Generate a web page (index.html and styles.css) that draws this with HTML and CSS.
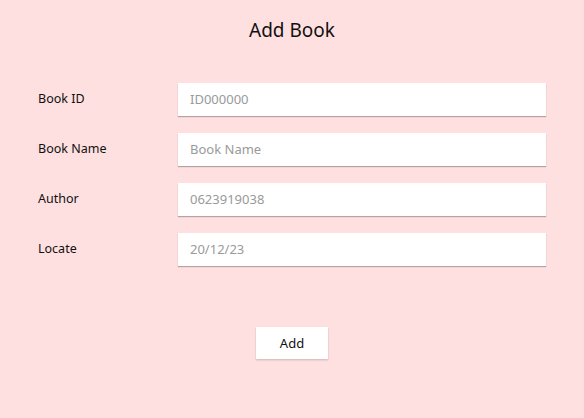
FILE: index.html
```html
<!DOCTYPE html>
<html>
<head>
<meta charset="utf-8">
<link rel="stylesheet" href="styles.css">
</head>
<body>
<div class="page">
  <h1 class="title">Add Book</h1>
  <form class="form">
    <div class="row">
      <label class="label">Book ID</label>
      <input class="field" type="text" placeholder="ID000000">
    </div>
    <div class="row">
      <label class="label">Book Name</label>
      <input class="field" type="text" placeholder="Book Name">
    </div>
    <div class="row">
      <label class="label">Author</label>
      <input class="field" type="text" placeholder="0623919038">
    </div>
    <div class="row">
      <label class="label">Locate</label>
      <input class="field" type="text" placeholder="20/12/23">
    </div>
    <div class="actions">
      <button class="btn" type="button">Add</button>
    </div>
  </form>
</div>
</body>
</html>
```

FILE: styles.css
```css
html, body {
  margin: 0;
  padding: 0;
  background: #ffe0e0;
  font-family: "Noto Sans", "Open Sans", sans-serif;
  color: #111;
}
.page {
  width: 584px;
  height: 418px;
  box-sizing: border-box;
  padding-top: 16px;
}
.title {
  margin: 0;
  text-align: center;
  font-size: 19px;
  font-weight: 400;
  line-height: 28px;
}
.form {
  margin-top: 39px;
  display: flex;
  flex-direction: column;
  gap: 17px;
}
.row {
  display: flex;
  align-items: center;
  padding-left: 38px;
  height: 33px;
}
.label {
  width: 140px;
  font-size: 12.5px;
  margin-top: -3px;
}
.field {
  width: 368px;
  height: 33px;
  box-sizing: border-box;
  border: none;
  outline: none;
  background: #fff;
  padding: 0 12px 2px;
  font-family: inherit;
  font-size: 13px;
  color: #333;
  box-shadow: 0 1px 1px rgba(0,0,0,0.28);
}
.field::placeholder {
  color: #9a9a9a;
}
.actions {
  display: flex;
  justify-content: center;
  margin-top: 44px;
}
.btn {
  width: 72px;
  height: 32px;
  border: none;
  background: #fff;
  font-family: inherit;
  font-size: 13px;
  color: #111;
  box-shadow: 0 1px 2px rgba(0,0,0,0.2);
  padding: 0;
  cursor: pointer;
}
```
